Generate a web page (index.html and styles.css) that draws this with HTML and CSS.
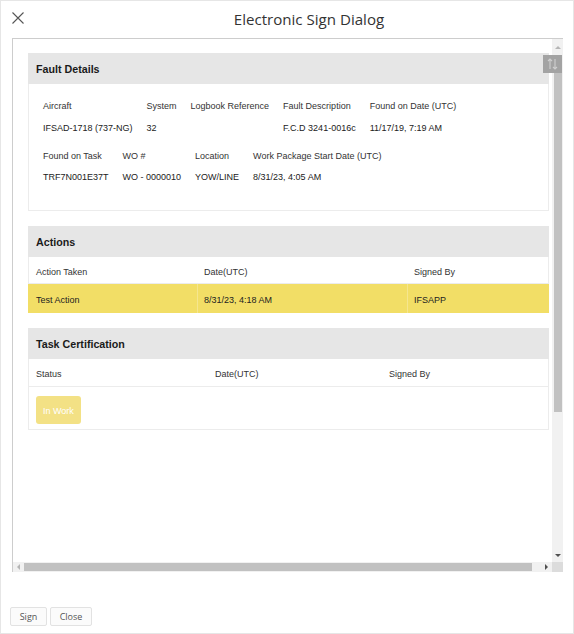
FILE: index.html
```html
<!DOCTYPE html>
<html>
<head>
<meta charset="utf-8">
<link rel="stylesheet" href="styles.css">
</head>
<body>
<div class="dialog">
  <div class="dlg-header">
    <button class="close-x" aria-label="Close">
      <svg width="12" height="12" viewBox="0 0 12 12"><path d="M0.5 0.5 L11.5 11.5 M11.5 0.5 L0.5 11.5" stroke="#555" stroke-width="1.1" fill="none"/></svg>
    </button>
    <div class="dlg-title">Electronic Sign Dialog</div>
  </div>

  <div class="frame">
    <div class="viewport">
      <section class="panel">
        <div class="panel-head">Fault Details</div>
        <div class="fault-body">
          <div class="field-row">
            <div class="field"><div class="lbl">Aircraft</div><div class="val">IFSAD-1718 (737-NG)</div></div>
            <div class="field"><div class="lbl">System</div><div class="val">32</div></div>
            <div class="field"><div class="lbl">Logbook Reference</div><div class="val">&nbsp;</div></div>
            <div class="field"><div class="lbl">Fault Description</div><div class="val">F.C.D 3241-0016c</div></div>
            <div class="field"><div class="lbl">Found on Date (UTC)</div><div class="val">11/17/19, 7:19 AM</div></div>
          </div>
          <div class="field-row">
            <div class="field"><div class="lbl">Found on Task</div><div class="val">TRF7N001E37T</div></div>
            <div class="field"><div class="lbl">WO #</div><div class="val">WO - 0000010</div></div>
            <div class="field"><div class="lbl">Location</div><div class="val">YOW/LINE</div></div>
            <div class="field"><div class="lbl">Work Package Start Date (UTC)</div><div class="val">8/31/23, 4:05 AM</div></div>
          </div>
        </div>
      </section>

      <section class="panel">
        <div class="panel-head">Actions</div>
        <div class="trow thead actions-cols">
          <div class="cell">Action Taken</div>
          <div class="cell">Date(UTC)</div>
          <div class="cell">Signed By</div>
        </div>
        <div class="trow selected actions-cols">
          <div class="cell">Test Action</div>
          <div class="cell">8/31/23, 4:18 AM</div>
          <div class="cell">IFSAPP</div>
        </div>
      </section>

      <section class="panel bordered">
        <div class="panel-head">Task Certification</div>
        <div class="trow thead cert-cols">
          <div class="cell">Status</div>
          <div class="cell">Date(UTC)</div>
          <div class="cell">Signed By</div>
        </div>
        <div class="trow cert-body cert-cols">
          <div class="cell"><span class="badge">In Work</span></div>
          <div class="cell"></div>
          <div class="cell"></div>
        </div>
      </section>
    </div>

    <div class="vbar">
      <div class="arrow-box up-box"><span class="tri-up"></span></div>
      <div class="vthumb"></div>
      <div class="vspace"></div>
      <div class="arrow-box down-box"><span class="tri-down"></span></div>
    </div>
    <div class="hbar">
      <div class="harrow"><span class="tri-left"></span></div>
      <div class="hthumb"></div>
      <div class="hspace"></div>
      <div class="harrow"><span class="tri-right"></span></div>
    </div>
    <div class="corner"></div>

    <div class="col-toggle">
      <svg width="13" height="12" viewBox="0 0 13 12">
        <path d="M4 1 V11 M2 3 L4 1 L6 3 M9 1 V11 M7 9 L9 11 L11 9" stroke="#cfcfcf" stroke-width="1.1" fill="none"/>
      </svg>
    </div>
  </div>

  <div class="dlg-footer">
    <button class="btn">Sign</button>
    <button class="btn">Close</button>
  </div>
</div>
</body>
</html>
```

FILE: styles.css
```css
html, body {
  margin: 0;
  padding: 0;
  background: #fff;
}

.dialog {
  width: 574px;
  height: 634px;
  box-sizing: border-box;
  border: 1px solid #e6e6e6;
  display: flex;
  flex-direction: column;
  font-family: "Liberation Sans", Arial, sans-serif;
  color: #333;
}

.dlg-header {
  height: 37px;
  display: flex;
  align-items: flex-start;
}

.close-x {
  margin: 11px 0 0 11px;
  padding: 0;
  border: 0;
  background: none;
  width: 12px;
  height: 12px;
  display: flex;
}

.dlg-title {
  flex: 1;
  text-align: center;
  padding-left: 21px;
  margin-top: 7px;
  font-family: "Open Sans", sans-serif;
  font-size: 15.1px;
  line-height: 22px;
  color: #333;
}

.frame {
  position: relative;
  margin-left: 11px;
  width: 551px;
  height: 534px;
  box-sizing: border-box;
  border-top: 1px solid #cdcdcd;
  border-left: 1px solid #cdcdcd;
  display: grid;
  grid-template-columns: 539px 11px;
  grid-template-rows: 523px 10px;
}

.viewport {
  overflow: hidden;
  padding: 14px 0 0 15px;
  box-sizing: border-box;
  display: flex;
  flex-direction: column;
  gap: 15px;
}

.panel {
  width: 521px;
  flex: none;
}

.panel-head {
  height: 31px;
  box-sizing: border-box;
  background: #e6e6e6;
  font-weight: bold;
  font-size: 10.7px;
  line-height: 29px;
  padding: 2px 0 0 8px;
  color: #1a1a1a;
}

.fault-body {
  border: 1px solid #ececec;
  border-top: 0;
  height: 127px;
  box-sizing: border-box;
  padding: 16px 14px 0 14px;
  display: flex;
  flex-direction: column;
  gap: 16px;
}

.field-row {
  display: flex;
  gap: 14px;
}

.field {
  display: flex;
  flex-direction: column;
  gap: 9.5px;
  font-size: 9px;
  line-height: 12px;
}

.lbl { color: #333; }
.val { color: #222; white-space: nowrap; }

.trow {
  display: grid;
  font-size: 9px;
  line-height: 12px;
}

.actions-cols { grid-template-columns: 169px 210px 1fr; }
.cert-cols { grid-template-columns: 178px 174px 1fr; }

.cell {
  padding-left: 8px;
  padding-top: 2px;
  display: flex;
  align-items: center;
}

.thead {
  height: 27px;
  border-left: 1px solid #ececec;
  border-right: 1px solid #ececec;
  border-bottom: 1px solid #ececec;
  box-sizing: border-box;
  color: #333;
}

.thead .cell { padding-top: 3px; }
.thead .cell:first-child { padding-left: 7px; }
.actions-cols.thead .cell + .cell { padding-left: 6px; }

.selected {
  height: 29px;
  background: #f2de66;
  color: #222;
}

.selected .cell + .cell {
  border-left: 1px solid #f5e68f;
}

.selected .cell:first-child { padding-left: 8px; }
.selected .cell + .cell { padding-left: 6px; }

.bordered {
  border: 1px solid #ececec;
  border-top: 0;
  box-sizing: border-box;
}

.bordered .panel-head { margin: 0 -1px; }
.bordered .thead { border-left: 0; border-right: 0; height: 28px; }
.bordered .thead .cell:first-child { padding-left: 7px; }

.cert-body {
  height: 42px;
  align-items: start;
  padding-top: 7px;
  box-sizing: border-box;
}

.cert-body .cell:first-child { padding-left: 7px; }

.badge {
  display: inline-block;
  background: #f3e185;
  color: #fff;
  border-radius: 3px;
  height: 28px;
  line-height: 30px;
  padding: 0 7px;
  font-size: 9px;
}

/* scrollbars */
.vbar {
  background: #f1f1f1;
  display: flex;
  flex-direction: column;
  align-items: center;
}

.arrow-box {
  width: 11px;
  display: flex;
  justify-content: center;
  align-items: center;
  flex: none;
}

.up-box { height: 17px; }
.down-box { height: 14px; }

.vthumb {
  width: 8px;
  height: 356px;
  background: #c1c1c1;
  flex: none;
}

.vspace { flex: 1; }

.tri-up {
  width: 0; height: 0;
  border-left: 3px solid transparent;
  border-right: 3px solid transparent;
  border-bottom: 3px solid #b5b5b5;
}

.tri-down {
  width: 0; height: 0;
  border-left: 3px solid transparent;
  border-right: 3px solid transparent;
  border-top: 3px solid #505050;
}

.hbar {
  background: #f1f1f1;
  display: flex;
  align-items: center;
}

.harrow {
  width: 11px;
  height: 10px;
  display: flex;
  justify-content: center;
  align-items: center;
  flex: none;
}

.hthumb {
  width: 508px;
  height: 8px;
  background: #c1c1c1;
  flex: none;
}

.hspace { flex: 1; }

.tri-left {
  width: 0; height: 0;
  border-top: 3px solid transparent;
  border-bottom: 3px solid transparent;
  border-right: 3px solid #b5b5b5;
}

.tri-right {
  width: 0; height: 0;
  border-top: 3px solid transparent;
  border-bottom: 3px solid transparent;
  border-left: 3px solid #505050;
}

.corner { background: #dcdcdc; }

.col-toggle {
  position: absolute;
  left: 530px;
  top: 16px;
  width: 19px;
  height: 18px;
  background: #a3a3a3;
  display: flex;
  justify-content: center;
  align-items: center;
}

.dlg-footer {
  display: flex;
  gap: 3px;
  padding: 35px 0 0 9px;
}

.btn {
  height: 19px;
  box-sizing: border-box;
  padding: 0 8px;
  border: 1px solid #e2e2e2;
  border-radius: 2px;
  background: #fbfbfb;
  font-family: "Open Sans", sans-serif;
  font-size: 9px;
  color: #555;
  line-height: 17px;
}

.btn:first-child { width: 37px; }
.btn:last-child { width: 42px; }
```
